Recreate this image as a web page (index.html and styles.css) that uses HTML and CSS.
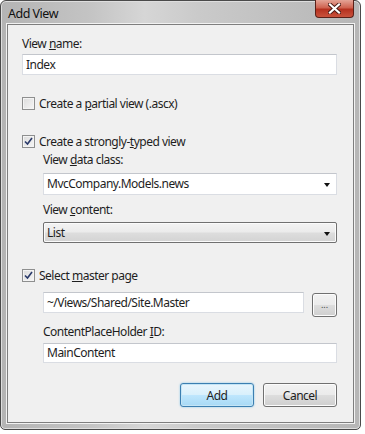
FILE: index.html
```html
<!DOCTYPE html>
<html>
<head>
<meta charset="utf-8">
<link rel="stylesheet" href="styles.css">
</head>
<body>
<div class="window">
  <div class="titlebar">
    <span class="title">Add View</span>
    <div class="close"><svg width="13" height="11" viewBox="0 0 13 11"><path d="M2 1.5 L11 9.5 M11 1.5 L2 9.5" stroke="#4a1a14" stroke-width="4" stroke-linecap="square"/><path d="M2 1.5 L11 9.5 M11 1.5 L2 9.5" stroke="#fff" stroke-width="2.2" stroke-linecap="square"/></svg></div>
  </div>
  <div class="client">
    <div class="label first">View <u>n</u>ame:</div>
    <div class="textbox name">Index</div>

    <div class="check row1"><span class="box"></span><span>Create a <u>p</u>artial view (.ascx)</span></div>
    <div class="check row2"><span class="box checked"><svg width="9" height="9" viewBox="0 0 9 9"><path d="M1 4.5 L3.5 7 L8 1" fill="none" stroke="#2a3a6a" stroke-width="1.6"/></svg></span><span>Create a strongly-<u>t</u>yped view</span></div>

    <div class="indent">
      <div class="label l-data">View <u>d</u>ata class:</div>
      <div class="textbox combo">MvcCompany.Models.news<span class="arrow"></span></div>
      <div class="label l-content">View <u>c</u>ontent:</div>
      <div class="select">List<span class="arrow"></span></div>
    </div>

    <div class="check row3"><span class="box checked"><svg width="9" height="9" viewBox="0 0 9 9"><path d="M1 4.5 L3.5 7 L8 1" fill="none" stroke="#2a3a6a" stroke-width="1.6"/></svg></span><span>Select <u>m</u>aster page</span></div>

    <div class="indent">
      <div class="master-row">
        <div class="textbox master">~/Views/Shared/Site.Master</div>
        <div class="btn dots">...</div>
      </div>
      <div class="label l-cph">ContentPlaceHolder <u>I</u>D:</div>
      <div class="textbox cph">MainContent</div>
    </div>

    <div class="buttons">
      <div class="btn add">Add</div>
      <div class="btn cancel">Cancel</div>
    </div>
  </div>
</div>
</body>
</html>
```
FILE: styles.css
```css
* { box-sizing: border-box; }
html, body { margin: 0; padding: 0; background: #ffffff; }
body {
  font-family: "Noto Sans", "Open Sans", sans-serif;
  font-size: 12px;
  letter-spacing: -0.5px;
  color: #1e1e1e;
}
.window {
  width: 361px;
  height: 430px;
  border: 1px solid #4a4a4a;
  border-radius: 6px 6px 5px 5px;
  background: linear-gradient(90deg, #b4b4b4 0%, #c4c4c4 25%, #d6d6d6 40%, #cacaca 55%, #bfbfbf 80%, #b6b6b6 100%);
  box-shadow: inset 0 0 0 1px #dedede;
  padding: 0 6px 6px 6px;
  display: flex;
  flex-direction: column;
}
.titlebar {
  height: 23px;
  display: flex;
  align-items: flex-start;
  justify-content: space-between;
  position: relative;
}
.title {
  padding: 5px 0 0 1px;
  line-height: 16px;
  font-size: 12.5px;
  color: #111;
}
.close {
  width: 39px;
  height: 18px;
  margin-top: -1px;
  margin-right: 0;
  border: 1px solid #5a2018;
  border-top: none;
  border-radius: 0 0 4px 4px;
  background: linear-gradient(180deg, #e4a496 0%, #cf6350 45%, #b5311f 55%, #c9523c 100%);
  display: flex;
  align-items: center;
  justify-content: center;
}
.client {
  flex: 1;
  background: #f0f0f0;
  border: 1px solid #7e7e7e;
  box-shadow: 0 0 0 1px #f2f2f2;
  padding: 0 16px 0 14px;
  display: flex;
  flex-direction: column;
}
.label {
  line-height: 16px;
  height: 16px;
}
.first { margin-top: 11px; }
.textbox {
  background: #fff;
  border: 1px solid #dadde3;
  border-top-color: #c3c6cc;
  height: 21px;
  line-height: 19px;
  padding: 0 3px;
  position: relative;
}
.name { margin-top: 2px; }
.check {
  display: flex;
  align-items: center;
  height: 16px;
  gap: 4px;
}
.box {
  width: 13px;
  height: 13px;
  border: 1px solid #8e8f8f;
  background: linear-gradient(135deg, #dcdcdc 0%, #f6f6f6 100%);
  box-shadow: inset 0 0 0 1px #f4f4f4;
  display: flex;
  align-items: center;
  justify-content: center;
  margin-right: 0;
}
.row1 { margin-top: 20px; }
.row2 { margin-top: 22px; }
.indent {
  margin-left: 21px;
  display: flex;
  flex-direction: column;
}
.l-data { margin-top: 3px; }
.combo { margin-top: 5px; height: 22px; line-height: 20px; }
.arrow {
  position: absolute;
  right: 6px;
  top: 50%;
  margin-top: -1px;
  width: 0;
  height: 0;
  border-left: 3.5px solid transparent;
  border-right: 3.5px solid transparent;
  border-top: 4px solid #111;
}
.l-content { margin-top: 7px; }
.select {
  margin-top: 4px;
  height: 21px;
  line-height: 19px;
  padding: 0 3px;
  border: 1px solid #707070;
  border-radius: 2px;
  background: linear-gradient(180deg, #f3f3f3 0%, #ebebeb 48%, #dddddd 52%, #d3d3d3 100%);
  box-shadow: inset 0 0 0 1px #fbfbfb;
  position: relative;
}
.row3 { margin-top: 24px; }
.master-row {
  margin-top: 9px;
  display: flex;
  align-items: flex-start;
  justify-content: space-between;
  height: 25px;
}
.master { width: 261px; }
.btn {
  border: 1px solid #707070;
  border-radius: 3px;
  background: linear-gradient(180deg, #f2f2f2 0%, #ebebeb 48%, #dddddd 52%, #cfcfcf 100%);
  box-shadow: inset 0 0 0 1px #fcfcfc;
  display: flex;
  align-items: center;
  justify-content: center;
}
.dots {
  width: 25px;
  height: 24px;
  margin-top: 1px;
  font-size: 9px;
  letter-spacing: 0;
  color: #444;
  padding-bottom: 2px;
}
.l-cph { margin-top: 7px; }
.cph { margin-top: 3px; height: 20px; line-height: 18px; }
.buttons {
  margin-top: 20px;
  display: flex;
  justify-content: flex-end;
  gap: 9px;
}
.buttons .btn {
  width: 74px;
  height: 24px;
}
.add {
  border-color: #3c7fb1 !important;
  background: linear-gradient(180deg, #eaf6fd 0%, #d9f0fc 48%, #bee6fd 52%, #a7d9f5 100%) !important;
  box-shadow: inset 0 0 0 1px #c4e5f6, 0 0 2px #7cc0e8 !important;
}
u { text-decoration: underline; text-underline-offset: 1px; }
```
